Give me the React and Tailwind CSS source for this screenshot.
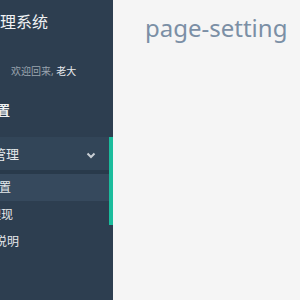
import React from 'react';

const font = { fontFamily: '"Noto Sans", "Noto Sans CJK SC", sans-serif' };

function SubItem({ label, shift, active }) {
  return (
    <div className={`h-[27px] flex items-center overflow-hidden ${active ? 'bg-[#36495d]' : ''}`}>
      <span className={`whitespace-nowrap text-[12px] text-[#e6e9ec] ${shift}`}>{label}</span>
    </div>
  );
}

export default function App() {
  return (
    <div className="w-[300px] h-[300px] flex bg-[#f5f5f5] overflow-hidden" style={font}>
      {/* sidebar, scrolled left so only part shows */}
      <aside className="w-[113px] shrink-0 h-full bg-[#2d3e50] flex flex-col overflow-hidden">
        <div className="h-[44px] pt-[10px] whitespace-nowrap text-[16px] text-[#f0f2f4] -ml-[48px]">
          后台管理系统
        </div>
        <div className="pt-[20px] h-[36px] whitespace-nowrap text-[10px] ml-[11px]">
          <span className="text-[#9aa4ae]">欢迎回来, </span>
          <span className="text-[#e8ebee]">老大</span>
        </div>
        <div className="pt-[21px] h-[57px] whitespace-nowrap text-[13px] font-bold text-[#f0f2f4] -ml-[42px]">
          系统设置
        </div>
        <div className="flex">
          <div className="flex-1 flex flex-col">
            <div className="h-[37px] pt-[3px] bg-[#324558] border-b-[4px] border-[#293a4b] flex items-center justify-between overflow-hidden">
              <span className="whitespace-nowrap text-[13px] text-[#e6e9ec] -ml-[33px]">页面管理</span>
              <svg width="10" height="7" viewBox="0 0 10 7" className="mr-[13px]">
                <path d="M1.5 1.5 L5 5 L8.5 1.5" fill="none" stroke="#c8ced4" strokeWidth="2" />
              </svg>
            </div>
            <SubItem label="页面设置" shift="-ml-[37px]" active />
            <SubItem label="页面整理现" shift="-ml-[47px]" />
            <SubItem label="使用说明" shift="-ml-[29px]" />
          </div>
          <div className="w-[4px] shrink-0 flex flex-col">
            <div className="h-[88px] bg-[#1abc9c]" />
          </div>
        </div>
      </aside>
      <main className="flex-1 pl-[32px] pt-[10px]">
        <h1 className="text-[24px] leading-[36px] text-[#7b8fa5] font-normal">page-setting</h1>
      </main>
    </div>
  );
}
